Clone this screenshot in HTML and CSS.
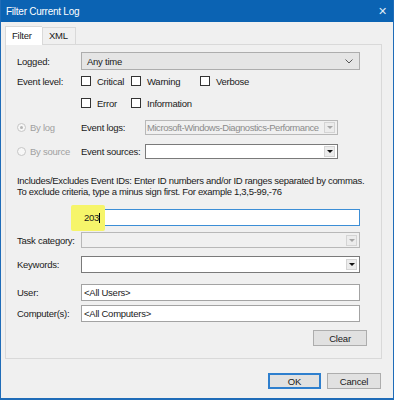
FILE: index.html
```html
<!DOCTYPE html>
<html lang="en">
<head>
  <meta charset="UTF-8">
  <title>Filter Current Log</title>
  <link rel="stylesheet" href="styles.css">
</head>
<body>

  <div class="window">
    <div class="titlebar">
      <span>Filter Current Log</span>
      <span class="close">&#x2715;</span>
    </div>

    <div class="tabs">
      <div class="tab active">Filter</div>
      <div class="tab">XML</div>
    </div>

    <div class="panel">
      <div class="row logged">
        <div class="label">Logged:</div>
        <div class="select">
          <span>Any time</span>
          <svg class="chev" width="8" height="5" viewBox="0 0 8 5"><path d="M0.5 0.5 L4 4 L7.5 0.5" fill="none" stroke="#555" stroke-width="1"/></svg>
        </div>
      </div>

      <div class="row levels">
        <div class="label">Event level:</div>
        <div class="checks">
          <label class="check"><span class="box"></span>Critical</label>
          <label class="check"><span class="box"></span>Warning</label>
          <label class="check"><span class="box"></span>Verbose</label>
        </div>
      </div>
      <div class="row levels second">
        <div class="label"></div>
        <div class="checks">
          <label class="check"><span class="box"></span>Error</label>
          <label class="check"><span class="box"></span>Information</label>
        </div>
      </div>

      <div class="row source bylog">
        <div class="radio"><span class="dot on"></span>By log</div>
        <div class="label">Event logs:</div>
        <div class="combo disabled">
          <span class="value tight">Microsoft-Windows-Diagnostics-Performance</span>
          <span class="btn"><i class="tri"></i></span>
        </div>
      </div>
      <div class="row source bysource">
        <div class="radio"><span class="dot"></span>By source</div>
        <div class="label">Event sources:</div>
        <div class="combo">
          <span class="value"></span>
          <span class="btn"><i class="tri"></i></span>
        </div>
      </div>

      <p class="hint">Includes/Excludes Event IDs: Enter ID numbers and/or ID ranges separated by commas. To exclude criteria, type a minus sign first. For example 1,3,5-99,-76</p>

      <div class="row ids">
        <div class="label"></div>
        <div class="input focus"><span class="mark">203</span><span class="caret"></span></div>
      </div>

      <div class="row task">
        <div class="label">Task category:</div>
        <div class="combo disabled wide">
          <span class="value"></span>
          <span class="btn"><i class="tri"></i></span>
        </div>
      </div>
      <div class="row keywords">
        <div class="label">Keywords:</div>
        <div class="combo wide">
          <span class="value"></span>
          <span class="btn"><i class="tri"></i></span>
        </div>
      </div>

      <div class="row user">
        <div class="label">User:</div>
        <div class="input">&lt;All Users&gt;</div>
      </div>
      <div class="row computer">
        <div class="label">Computer(s):</div>
        <div class="input">&lt;All Computers&gt;</div>
      </div>

      <div class="clear-row">
        <button class="button">Clear</button>
      </div>
    </div>

    <div class="footer">
      <button class="button default">OK</button>
      <button class="button">Cancel</button>
    </div>
  </div>

</body>
</html>
```

FILE: styles.css
```css
body {
  margin: 0;
  font-family: "Liberation Sans", Arial, sans-serif;
  font-size: 9.5px;
  letter-spacing: -0.25px;
  color: #1a1a1a;
}

.window {
  width: 394px;
  height: 400px;
  box-sizing: border-box;
  background-color: #f0f0f0;
  border: 1px solid #1f6cb8;
  border-top: none;
  border-bottom-width: 2px;
}

.titlebar {
  height: 22px;
  background-color: #0b63b3;
  color: white;
  display: flex;
  align-items: center;
  justify-content: space-between;
  padding: 0 6px 0 5px;
  font-size: 10px;
}

.close {
  font-size: 11px;
  color: #dfeaf6;
}

.tabs {
  display: flex;
  align-items: flex-end;
  margin: 4px 0 0 4px;
  height: 18px;
}

.tab {
  padding: 0 6px;
  height: 16px;
  line-height: 16px;
  border: 1px solid #d9d9d9;
  border-bottom: none;
  background-color: #f0f0f0;
}

.tab.active {
  height: 18px;
  line-height: 17px;
  width: 24px;
  background-color: #fff;
  border-right: none;
  margin-bottom: -1px;
  position: relative;
}

.tab + .tab {
  width: 20px;
}

.panel {
  margin-left: 4px;
  width: 364px;
  height: 313px;
  border: 1px solid #d9d9d9;
  background-color: #f0f0f0;
  padding-left: 11px;
}

.row {
  display: grid;
  grid-template-columns: 64px 279px;
  align-items: center;
}

.label {
  white-space: nowrap;
}

.logged {
  margin-top: 7px;
  height: 18px;
}

.select {
  height: 18px;
  box-sizing: border-box;
  border: 1px solid #adadad;
  background-color: #e5e5e5;
  display: flex;
  align-items: center;
  justify-content: space-between;
  padding: 0 6px 0 5px;
}

.levels {
  margin-top: 4px;
  height: 14px;
}

.levels.second {
  margin-top: 8px;
}

.checks {
  display: grid;
  grid-template-columns: 50px 69px auto;
}

.check {
  display: flex;
  align-items: center;
}

.box {
  width: 8px;
  height: 8px;
  border: 1px solid #333;
  background-color: #fff;
  margin-right: 6px;
}

.source {
  grid-template-columns: 64px 64px 193px;
  height: 15px;
}

.bylog {
  margin-top: 10px;
}

.bysource {
  margin-top: 9px;
}

.radio {
  display: flex;
  align-items: center;
  color: #a0a0a0;
}

.dot {
  width: 7px;
  height: 7px;
  border: 1px solid #c6c6c6;
  border-radius: 50%;
  background-color: #f7f7f7;
  margin-right: 4px;
  position: relative;
}

.dot.on::after {
  content: "";
  position: absolute;
  left: 2px;
  top: 2px;
  width: 3px;
  height: 3px;
  border-radius: 50%;
  background-color: #b5b5b5;
}

.combo {
  height: 15px;
  box-sizing: border-box;
  border: 1px solid #7a7a7a;
  background-color: #fff;
  display: flex;
  align-items: center;
  justify-content: space-between;
  overflow: hidden;
}

.combo .value {
  padding-left: 1px;
  white-space: nowrap;
  overflow: hidden;
  flex: 1;
}

.combo .value.tight {
  letter-spacing: -0.45px;
}

.combo.disabled {
  border-color: #b8b8b8;
  background-color: #f0f0f0;
  color: #8c8c8c;
}

.btn {
  width: 11px;
  height: 11px;
  margin: 0 2px 0 2px;
  border: 1px solid #d4d4d4;
  background-color: #ececec;
  box-sizing: border-box;
  display: flex;
  align-items: center;
  justify-content: center;
  flex-shrink: 0;
}

.tri {
  width: 0;
  height: 0;
  border-left: 3px solid transparent;
  border-right: 3px solid transparent;
  border-top: 3px solid #111;
}

.combo.disabled .tri {
  border-top-color: #a5a5a5;
}

.combo.wide {
  height: 16px;
}

.keywords .combo {
  height: 17px;
}

.hint {
  margin: 16px 0 0;
  width: 352px;
  line-height: 11px;
  letter-spacing: -0.3px;
}

.ids {
  margin-top: 12px;
  height: 17px;
}

.input {
  height: 17px;
  box-sizing: border-box;
  border: 1px solid #a3a3a3;
  background-color: #fff;
  display: flex;
  align-items: center;
  padding-left: 2px;
}

.input.focus {
  border-color: #3c8ed6;
  position: relative;
}

.mark {
  position: relative;
  z-index: 1;
}

.input.focus::before {
  content: "";
  position: absolute;
  left: -11px;
  top: -5px;
  width: 34px;
  height: 26px;
  background-color: #f6f56a;
  border-radius: 2px;
}

.caret {
  width: 1px;
  height: 10px;
  background-color: #000;
  position: relative;
  z-index: 1;
}

.task {
  margin-top: 6px;
  height: 16px;
}

.keywords {
  margin-top: 8px;
  height: 17px;
}

.user {
  margin-top: 11px;
  height: 17px;
}

.computer {
  margin-top: 4px;
  height: 17px;
}

.clear-row {
  display: flex;
  justify-content: flex-end;
  margin: 8px 14px 0 0;
}

.button {
  font-family: inherit;
  font-size: 9.5px;
  letter-spacing: -0.2px;
  color: #1a1a1a;
  width: 54px;
  height: 16px;
  padding: 0;
  border: 1px solid #adadad;
  background-color: #e1e1e1;
}

.footer {
  display: flex;
  justify-content: flex-end;
  gap: 6px;
  margin: 14px 12px 0 0;
}

.button.default {
  border: 2px solid #2e7fce;
  width: 53px;
}
```
